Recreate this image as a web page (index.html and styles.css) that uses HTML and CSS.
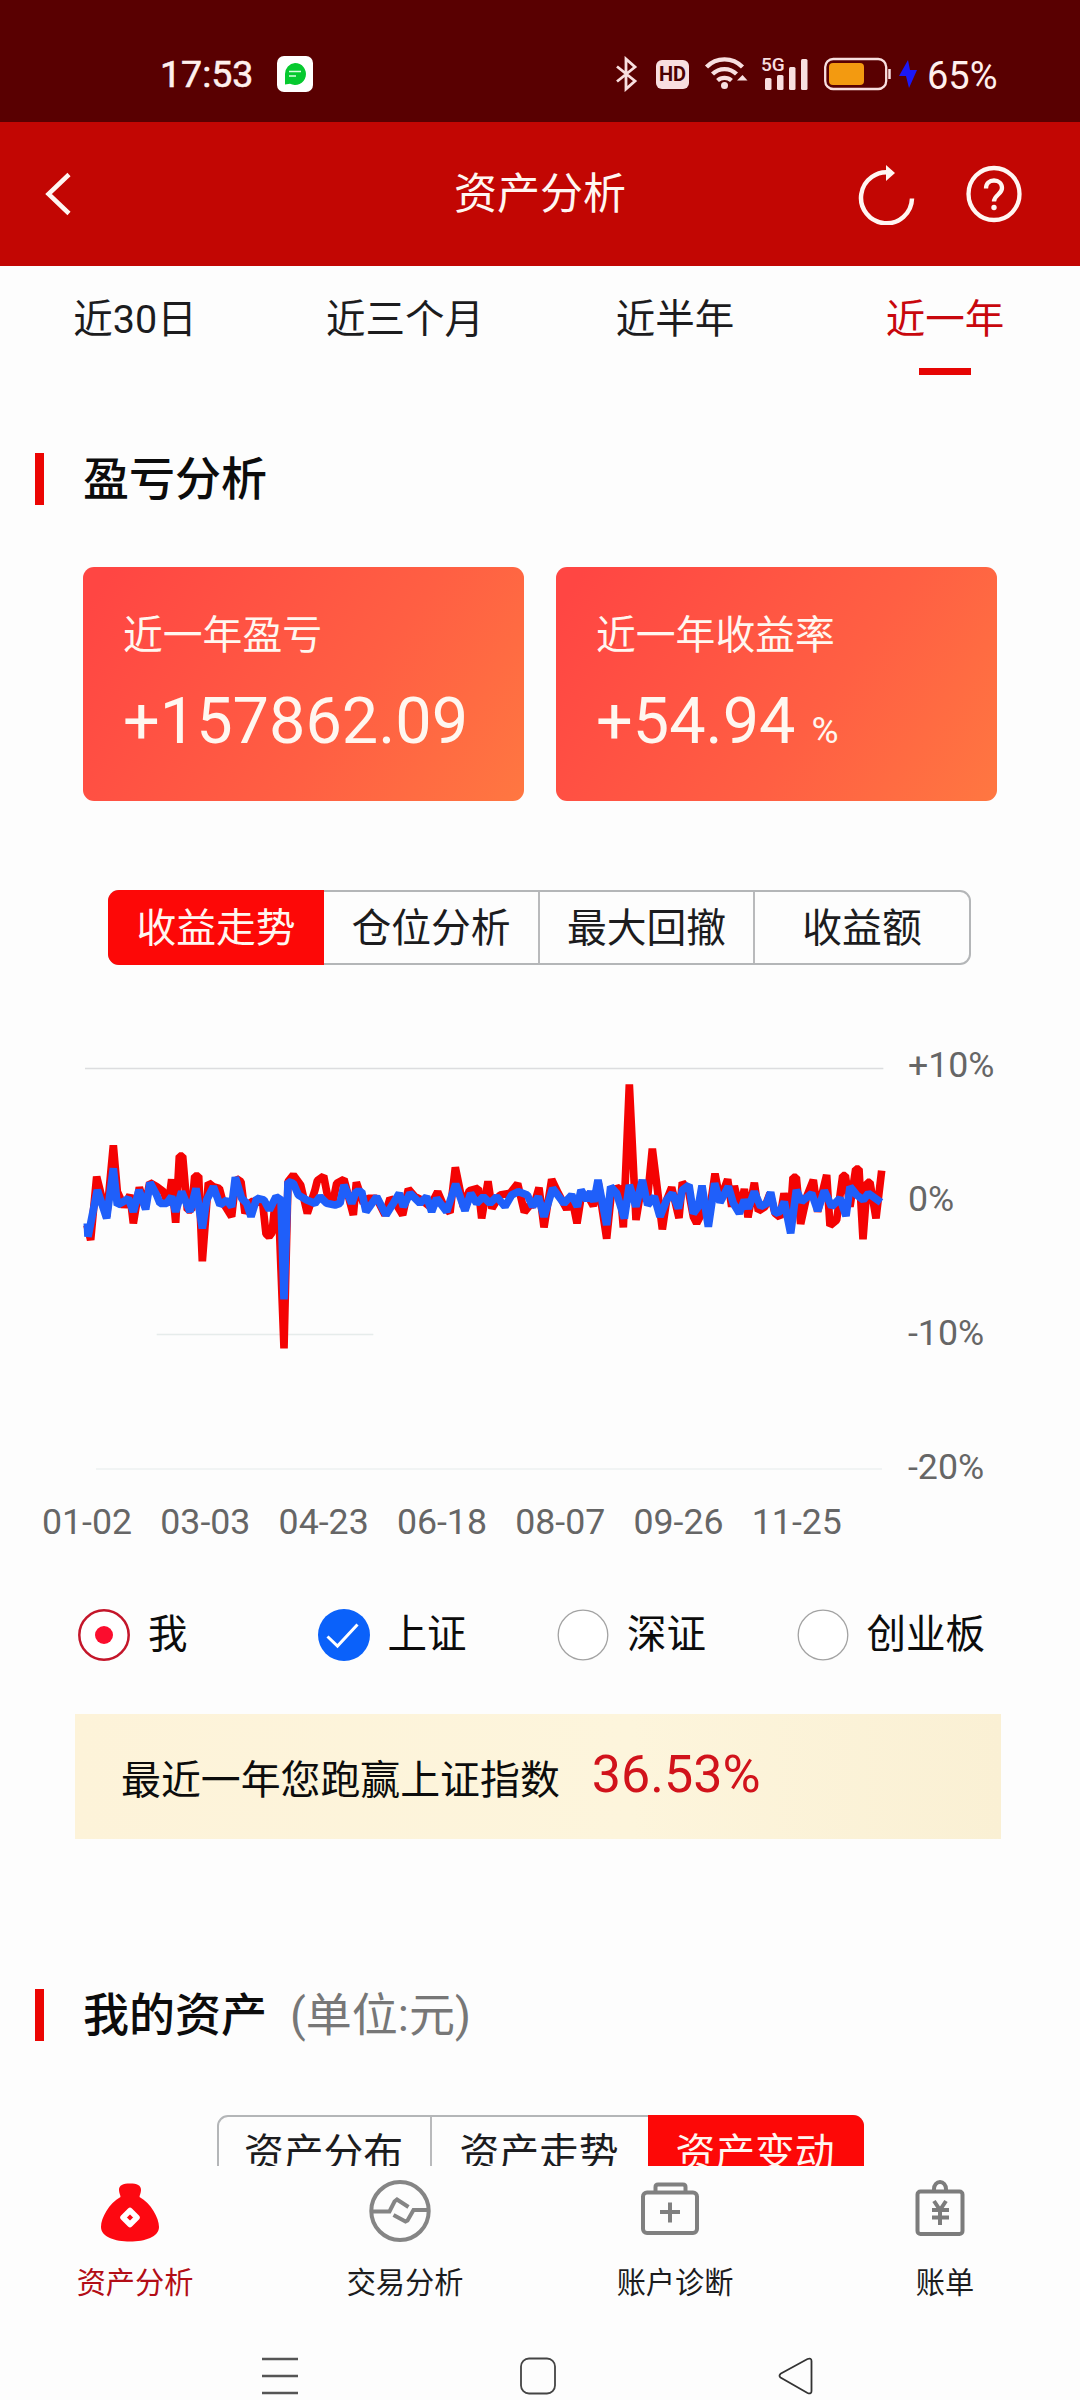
FILE: index.html
```html
<!DOCTYPE html>
<html lang="zh-CN">
<head>
<meta charset="utf-8">
<title>资产分析</title>
<link rel="stylesheet" href="styles.css">
</head>
<body>
<div class="status">
  <span class="clock">17:53</span>
  <svg class="chat" width="36" height="36" viewBox="0 0 36 36"><rect width="36" height="36" rx="7" fill="#fff"/><path d="M18 7a11 11 0 1 1-5 20.800l-5 .7V18A11 11 0 0 1 18 7z" fill="#06c92f"/><path d="M12 15.500h12M12 20h7" stroke="#d8ffe0" stroke-width="1.600"/></svg>
  <svg class="bt" width="24" height="36" viewBox="0 0 24 36" fill="none" stroke="#f8dfe0" stroke-width="2.800"><path d="M2 10.500 20 25l-9 8V3l9 8L2 25.500"/></svg>
  <span class="hd">HD</span>
  <svg class="wifi" width="44" height="36" viewBox="0 0 44 36" fill="none" stroke="#f8dfe0" stroke-width="4.300"><path d="M2.500 12a25 25 0 0 1 36 0M8.500 19a17 17 0 0 1 24 0M13.500 25.500a10.500 10.500 0 0 1 14 0"/><circle cx="20.500" cy="30.500" r="3.500" fill="#f8dfe0" stroke="none"/><path d="M33 25.500l5.500-5.500 5 5.500z" fill="#f8dfe0" stroke="none"/></svg>
  <span class="cell"><b>5G</b><svg width="48" height="36" viewBox="0 0 48 36" fill="#f8dfe0"><rect x="4" y="22" width="6.500" height="12" rx="1.500"/><rect x="16" y="19" width="6.500" height="15" rx="1.500"/><rect x="28" y="11" width="6.500" height="23" rx="1.500"/><rect x="40" y="3" width="6.500" height="31" rx="1.500"/></svg></span>
  <svg class="batt" width="68" height="34" viewBox="0 0 68 34"><rect x="1.200" y="2" width="61" height="30" rx="8" fill="none" stroke="#f8dfe0" stroke-width="2.300"/><rect x="5" y="6" width="35" height="22" rx="4" fill="#f39a10"/><path d="M65.500 12v10" stroke="#f8dfe0" stroke-width="2.500"/></svg>
  <svg class="bolt" width="20" height="30" viewBox="0 0 20 30"><path d="M10 1 1 17h7l3 12 8-18h-7z" fill="#1c18f5"/></svg>
  <span class="pct">65%</span>
</div>
<header class="header">
  <svg class="back" width="28" height="46" viewBox="0 0 28 46" fill="none" stroke="#fff6f2" stroke-width="4.500"><path d="M25 3.500 4.500 23 25 42.500"/></svg>
  <h1>资产分析</h1>
  <svg class="refresh" width="58" height="62" viewBox="0 0 58 62"><path d="M34.500 9.800A25.500 25.500 0 1 0 55 35.500" fill="none" stroke="#fff6f2" stroke-width="4.500"/><path d="M29 2l9 8-9 8z" fill="#fff6f2"/></svg>
  <svg class="help" width="56" height="58" viewBox="0 0 56 58" fill="none" stroke="#fff6f2" stroke-width="4.300"><ellipse cx="28" cy="29" rx="25.500" ry="26"/><path d="M20 23.500c0-5 3.500-8 8-8s8 3 8 7.500c0 6.500-8 7-8 13.500"/><circle cx="28" cy="42.500" r="2.700" fill="#fff6f2" stroke="none"/></svg>
</header>
<main class="content">
  <nav class="tabs">
    <a class="tab">近30日</a><a class="tab">近三个月</a><a class="tab">近半年</a><a class="tab on">近一年</a>
  </nav>
  <h2 class="section">盈亏分析</h2>
  <div class="cards">
    <div class="card"><p>近一年盈亏</p><strong>+157862.09</strong></div>
    <div class="card"><p>近一年收益率</p><strong>+54.94<small>%</small></strong></div>
  </div>
  <div class="seg">
    <span class="on">收益走势</span><span>仓位分析</span><span>最大回撤</span><span>收益额</span>
  </div>
  <div class="chart">
    <svg width="840" height="440" viewBox="0 0 2520 1320" fill="none">
      <path d="M75 85.500H2470" stroke="#dcdddf" stroke-width="4"/>
      <path d="M290 883.500H940" stroke="#e6eceb" stroke-width="4"/>
      <path d="M108 1287H2466" stroke="#edf0f0" stroke-width="4"/>
      <polyline class="me" points="81,555 92,600 110,410 140,530 160,316 172,455 192,500 210,465 220,550 238,442 255,500 269,428 290,440 310,455 325,495 335,418 347,548 358,348 368,348 382,510 395,510 404,408 416,408 427,664 445,428 460,440 478,445 490,490 515,530 528,415 543,425 555,520 573,485 590,485 608,490 618,582 627,590 636,578 645,490 655,480 672,925 684,425 700,405 722,435 742,520 765,450 772,422 791,408 805,480 820,480 830,430 852,418 880,525 889,427 910,490 925,475 950,475 975,525 990,475 1010,495 1028,525 1045,447 1065,470 1085,480 1110,500 1133,455 1150,495 1170,518 1186,382 1210,500 1228,452 1255,445 1265,535 1284,424 1296,505 1320,465 1350,460 1373,431 1393,516 1410,495 1422,495 1437,443 1452,562 1475,418 1495,460 1520,508 1535,470 1551,550 1565,460 1585,470 1600,498 1615,430 1640,596 1655,450 1680,443 1690,562 1708,133 1728,540 1746,430 1763,470 1777,326 1807,568 1820,480 1835,442 1857,534 1867,427 1885,450 1900,530 1910,550 1920,530 1935,480 1945,540 1965,401 1980,480 2003,418 2015,500 2023,438 2040,510 2053,447 2064,532 2083,428 2095,513 2115,500 2130,460 2145,520 2160,532 2172,460 2190,540 2199,412 2209,412 2222,552 2240,470 2260,420 2273,515 2300,405 2310,557 2330,540 2348,407 2356,407 2370,500 2387,387 2397,387 2409,598 2422,427 2430,427 2448,535 2465,392"/>
      <polyline class="sh" points="82,550 84,590 112,450 140,535 160,385 172,495 190,485 205,475 220,515 237,450 257,508 270,428 290,465 300,490 320,490 335,470 347,515 365,455 390,515 408,445 427,565 440,480 460,440 480,495 500,480 515,500 526,412 545,475 560,490 573,530 590,475 612,480 628,510 648,470 663,480 672,778 684,425 700,430 715,465 740,480 765,490 780,470 800,490 825,495 840,490 852,435 875,490 888,455 905,455 918,515 950,470 978,525 1000,490 1018,460 1030,500 1050,460 1080,490 1100,470 1115,515 1130,475 1160,515 1187,432 1215,512 1232,460 1250,490 1270,470 1290,490 1310,470 1335,500 1355,465 1375,455 1402,465 1418,500 1435,470 1452,530 1478,445 1512,490 1535,465 1552,500 1563,450 1580,480 1592,455 1602,485 1614,420 1640,555 1652,440 1670,460 1693,535 1708,435 1728,500 1747,420 1763,495 1783,470 1800,530 1820,480 1837,460 1855,505 1867,450 1887,435 1900,520 1915,500 1926,437 1945,560 1964,430 1980,487 2005,440 2020,490 2038,520 2053,480 2065,505 2083,455 2102,500 2120,490 2132,457 2145,520 2160,515 2173,485 2192,580 2209,450 2225,485 2255,460 2273,512 2293,452 2315,500 2340,475 2358,528 2370,440 2390,465 2410,480 2425,460 2463,487"/>
    </svg>
    <div class="ylabels"><span>+10%</span><span>0%</span><span>-10%</span><span>-20%</span></div>
  </div>
  <div class="xlabels"><span>01-02</span><span>03-03</span><span>04-23</span><span>06-18</span><span>08-07</span><span>09-26</span><span>11-25</span></div>
  <div class="legend">
    <label><svg width="52" height="52" viewBox="0 0 52 52"><circle cx="26" cy="26" r="24.700" fill="#fff" stroke="#c4162a" stroke-width="2.500"/><circle cx="26" cy="26" r="9" fill="#fb0d2e"/></svg>我</label>
    <label><svg width="52" height="52" viewBox="0 0 52 52"><circle cx="26" cy="26" r="26" fill="#0a61fa"/><path d="M9.500 27.500 19.500 37 39.500 15.500" fill="none" stroke="#fff" stroke-width="3"/></svg>上证</label>
    <label><svg width="52" height="52" viewBox="0 0 52 52"><circle cx="26" cy="26" r="24.800" fill="#fff" stroke="#a3a3a3" stroke-width="1.300"/></svg>深证</label>
    <label><svg width="52" height="52" viewBox="0 0 52 52"><circle cx="26" cy="26" r="24.800" fill="#fff" stroke="#a3a3a3" stroke-width="1.300"/></svg>创业板</label>
  </div>
  <div class="banner"><span>最近一年您跑赢上证指数</span><em>36.53%</em></div>
  <h2 class="section assets">我的资产<small>(单位:元)</small></h2>
  <div class="seg three">
    <span>资产分布</span><span>资产走势</span><span class="on">资产变动</span>
  </div>
</main>
<nav class="bottom">
  <a class="on"><svg width="64" height="64" viewBox="0 0 64 64"><path d="M21 9c0-5 4-6.500 11-6.500S43 4 43 9c0 3-1.500 5-1.500 7C53 22 61 37 61 46c0 10-14 14.500-29 14.500S3 56 3 46c0-9 8-24 19.500-30C22.500 14 21 12 21 9z" fill="#fd0811"/><path d="M32 29.500l7 7-7 7-7-7z" fill="#fd0811" stroke="#fff" stroke-width="5.500" stroke-linejoin="round"/></svg>资产分析</a>
  <a><svg width="64" height="64" viewBox="0 0 64 64" fill="none" stroke="#858585" stroke-width="4"><ellipse cx="32" cy="30" rx="28.700" ry="29"/><path d="M4 30.500h17.500l5-10 2.500-2 11.500 7.500M60 29H45.500l-6 10.500-2 1L25.500 34"/></svg>交易分析</a>
  <a><svg width="64" height="64" viewBox="0 0 64 64" fill="none" stroke="#808080" stroke-width="4"><rect x="5" y="11.500" width="54" height="40.500" rx="4"/><path d="M17.500 11V6q0-2.500 2.500-2.500h25q2.500 0 2.500 2.500v5M32 21.500v20M22 31h20"/></svg>账户诊断</a>
  <a><svg width="64" height="64" viewBox="0 0 64 64" fill="none" stroke="#7c7c7c" stroke-width="4"><rect x="9.500" y="10.500" width="45" height="42.500" rx="3"/><path d="M26 10v-2a6 7 0 0 1 12 0v2M26 20l6 9 6-9M32 29v15M24 29h17M24 36.500h17"/></svg>账单</a>
</nav>
<div class="sysnav">
  <svg width="36" height="40" viewBox="0 0 36 40" stroke="#555" stroke-width="2.500"><path d="M0 3h36M0 20h36M0 37h36"/></svg>
  <svg width="36" height="40" viewBox="0 0 36 40" fill="none" stroke="#444" stroke-width="1.800"><rect x="1" y="2.500" width="34" height="35" rx="8"/></svg>
  <svg width="36" height="40" viewBox="0 0 36 40" fill="none" stroke="#333" stroke-width="1.800"><path d="M2.500 17.800 29.500 3q4-1.500 4 2v30q0 3.500-4 2L2.500 21.500q-2-1.800 0-3.700z"/></svg>
</div>
</body>
</html>
```
FILE: styles.css
```css
* { box-sizing: border-box; }
body {
  margin: 0;
  width: 1080px;
  height: 2400px;
  overflow: hidden;
  display: flex;
  flex-direction: column;
  background: #fdfdfd;
  color: #1c1c1e;
  font-family: Roboto, "Noto Sans CJK SC", sans-serif;
}
h1, h2, p { margin: 0; font-weight: 400; }
svg { display: block; flex: none; }

.status {
  height: 122px;
  flex: none;
  display: flex;
  align-items: center;
  padding: 26px 0 0 160px;
  background: #590001;
  color: #fff0ee;
}
.clock { width: 117px; font-size: 37.500px; line-height: 40px; -webkit-text-stroke: .6px #fff0ee; }
.bt { margin-left: 302px; }
.hd {
  width: 33px;
  height: 29px;
  margin-left: 17px;
  border-radius: 6px;
  background: #f8dfe0;
  color: #4a0002;
  font-size: 20px;
  font-weight: 700;
  line-height: 29px;
  text-align: center;
}
.wifi { margin-left: 15px; margin-top: -2px; }
.cell { position: relative; margin-left: 13px; }
.cell b { position: absolute; left: 0; top: -1px; font-size: 19px; line-height: 20px; font-weight: 500; color: #f8dfe0; }
.batt { margin-left: 15px; }
.bolt { margin-left: 6px; }
.pct { margin-left: 9px; font-size: 38px; line-height: 40px; padding-top: 3px; }

.header {
  height: 144px;
  flex: none;
  display: flex;
  align-items: center;
  padding-left: 44px;
  background: #c20603;
  color: #fff6f2;
}
.header h1 { margin-left: 382px; width: 403px; font-size: 43px; line-height: 60px; }
.refresh { margin-bottom: 1px; }
.help { margin-left: 51px; }

.content { height: 1900px; flex: none; overflow: hidden; }
.tabs { display: grid; grid-template-columns: repeat(4, 270px); height: 110px; }
.tab {
  display: flex;
  flex-direction: column;
  align-items: center;
  padding-top: 29px;
  font-size: 39.500px;
  line-height: 50px;
}
.tab.on { color: #c8070d; }
.tab.on::after { content: ""; width: 52px; height: 7px; margin-top: 23px; background: #e60504; }

.section {
  display: flex;
  align-items: center;
  height: 52px;
  margin: 77px 0 0 35px;
  color: #0c0c0c;
  font-size: 46px;
  font-weight: 500;
  line-height: 52px;
}
.section::before { content: ""; width: 9px; height: 52px; margin-right: 39px; background: #ec0503; }
.section small { margin-left: 23px; font-size: 46px; font-weight: 400; color: #777; }

.cards { display: grid; grid-template-columns: 441px 441px; gap: 32px; margin: 62px 0 0 83px; }
.card {
  height: 234px;
  padding: 41px 0 0 40px;
  border-radius: 11px;
  background: linear-gradient(125deg, #ff4643 5%, #ff5f43 60%, #ff7741 100%);
  color: #fff7f0;
}
.card p { font-size: 39.800px; line-height: 56px; }
.card strong { display: block; margin-top: 17px; font-size: 64.800px; font-weight: 400; line-height: 80px; }
.card small { margin-left: 16px; font-size: 37px; }

.seg {
  display: grid;
  grid-template-columns: 214px 214px 215px 1fr;
  width: 863px;
  height: 75px;
  margin: 89px 0 0 108px;
  border: 2px solid #b4b6b8;
  border-radius: 11px;
  font-size: 39.800px;
  line-height: 71px;
  text-align: center;
}
.seg span { height: 71px; padding-top: 1px; }
.seg span + span { border-left: 2px solid #b9babc; }
.seg .on { height: 75px; margin: -2px 0; padding-top: 3px; background: #fd0807; color: #fff6f0; }
.seg .on:first-child { margin-left: -2px; border-radius: 11px 0 0 11px; }
.seg .on:last-child { margin-right: -2px; border: 0; border-radius: 0 11px 11px 0; }
.seg .on + span { border-left: 0; }
.three { grid-template-columns: 211px 218px 1fr; width: 647px; margin: 74px 0 0 217px; }
.three span { padding-right: 2px; }

.chart { display: flex; margin: 75px 0 0 60px; height: 440px; }
.chart polyline { stroke-linejoin: bevel; stroke-width: 23; }
.chart .me { stroke: #f40303; }
.chart .sh { stroke: #1f5ffa; }
.ylabels { display: flex; flex-direction: column; gap: 94px; padding: 5px 0 0 8px; }
.ylabels, .xlabels { font-size: 35.700px; line-height: 40px; color: #666; }
.xlabels { display: flex; margin: 22px 0 0 42px; }
.xlabels span { width: 118.300px; }

.legend { display: flex; margin: 67px 0 0 78px; }
.legend label {
  display: flex;
  align-items: center;
  gap: 18px;
  width: 239.500px;
  height: 52px;
  color: #0c0c0c;
  font-size: 39.500px;
  line-height: 54px;
  white-space: nowrap;
}
.banner {
  display: flex;
  align-items: center;
  width: 926px;
  height: 125px;
  margin: 53px 0 0 75px;
  padding-left: 46px;
  padding-bottom: 4px;
  background: linear-gradient(90deg, #fdf3d9, #fdf5dc 60%, #faf0d4);
  color: #0c0c0c;
  font-size: 39.900px;
}
.banner span { padding-top: 3px; }
.banner em { margin-left: 32px; font-size: 52px; font-style: normal; color: #d1131b; }
.assets { margin-top: 150px; }

.bottom {
  display: grid;
  grid-template-columns: repeat(4, 270px);
  height: 169px;
  flex: none;
  padding-top: 15px;
}
.bottom a {
  display: flex;
  flex-direction: column;
  align-items: center;
  gap: 18px;
  font-size: 29.200px;
  line-height: 40px;
}
.bottom svg { margin-left: -11px; overflow: visible; }
.bottom .on { color: #b30d16; }
.sysnav { display: flex; gap: 222px; padding: 21px 0 0 262px; }
```
